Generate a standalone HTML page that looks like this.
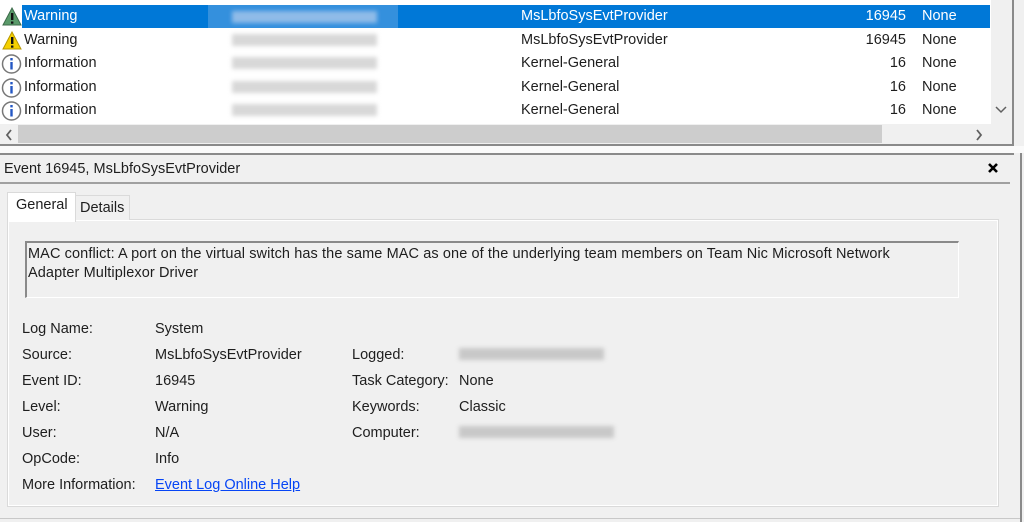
<!DOCTYPE html>
<html><head><style>
body{margin:0;width:1024px;height:522px;background:#f0f0f0;font-family:"Liberation Sans",sans-serif;font-size:14.5px;color:#1e1e1e;position:relative;overflow:hidden}
.a{position:absolute;white-space:nowrap}
.blur{position:absolute;left:232px;width:145px;height:12px;background:#d8d8d8;filter:blur(2px)}
</style></head><body>
<div class="a" style="left:0;top:0;width:1012px;height:124px;background:#fff"></div>
<div class="a" style="left:1012px;top:0;width:2px;height:146px;background:#8a8a8a"></div>
<div class="a" style="left:22px;top:5px;width:968px;height:23px;background:#0078d7"></div>
<div class="a" style="left:208px;top:5px;width:190px;height:23px;background:#4a9ae0;opacity:.7"></div>
<div class="blur" style="top:11px;background:#8fbbe8"></div>
<div class="blur" style="top:34px"></div><div class="blur" style="top:57px"></div><div class="blur" style="top:81px"></div><div class="blur" style="top:104px"></div>

<svg class="a" style="left:2px;top:7px" width="20" height="19"><path d="M10 1 L19 18 H1 Z" fill="#5a9a6a" stroke="#3d6b4a"/><rect x="9" y="6" width="2.4" height="7" fill="#111"/><rect x="9" y="14.5" width="2.4" height="2.2" fill="#111"/></svg>
<svg class="a" style="left:2px;top:31px" width="20" height="19"><path d="M10 1 L19 18 H1 Z" fill="#f5d000" stroke="#b89800"/><rect x="9" y="6" width="2.4" height="7" fill="#111"/><rect x="9" y="14.5" width="2.4" height="2.2" fill="#111"/></svg>
<svg class="a" style="left:1px;top:54px" width="21" height="20"><circle cx="10.5" cy="10" r="9" fill="#fff" stroke="#777" stroke-width="1.5"/><rect x="9.3" y="8" width="2.4" height="7.5" fill="#2457c4"/><rect x="9.3" y="4" width="2.4" height="2.4" fill="#2457c4"/></svg>
<svg class="a" style="left:1px;top:78px" width="21" height="20"><circle cx="10.5" cy="10" r="9" fill="#fff" stroke="#777" stroke-width="1.5"/><rect x="9.3" y="8" width="2.4" height="7.5" fill="#2457c4"/><rect x="9.3" y="4" width="2.4" height="2.4" fill="#2457c4"/></svg>
<svg class="a" style="left:1px;top:101px" width="21" height="20"><circle cx="10.5" cy="10" r="9" fill="#fff" stroke="#777" stroke-width="1.5"/><rect x="9.3" y="8" width="2.4" height="7.5" fill="#2457c4"/><rect x="9.3" y="4" width="2.4" height="2.4" fill="#2457c4"/></svg>

<div class="a" style="left:24px;top:8px;color:#fff">Warning</div>
<div class="a" style="left:521px;top:8px;color:#fff">MsLbfoSysEvtProvider</div>
<div class="a" style="left:850px;top:8px;width:56px;text-align:right;color:#fff">16945</div>
<div class="a" style="left:922px;top:8px;color:#fff">None</div>
<div class="a" style="left:24px;top:32px">Warning</div>
<div class="a" style="left:521px;top:32px">MsLbfoSysEvtProvider</div>
<div class="a" style="left:850px;top:32px;width:56px;text-align:right">16945</div>
<div class="a" style="left:922px;top:32px">None</div>
<div class="a" style="left:24px;top:55px">Information</div><div class="a" style="left:521px;top:55px">Kernel-General</div><div class="a" style="left:850px;top:55px;width:56px;text-align:right">16</div><div class="a" style="left:922px;top:55px">None</div>
<div class="a" style="left:24px;top:79px">Information</div><div class="a" style="left:521px;top:79px">Kernel-General</div><div class="a" style="left:850px;top:79px;width:56px;text-align:right">16</div><div class="a" style="left:922px;top:79px">None</div>
<div class="a" style="left:24px;top:102px">Information</div><div class="a" style="left:521px;top:102px">Kernel-General</div><div class="a" style="left:850px;top:102px;width:56px;text-align:right">16</div><div class="a" style="left:922px;top:102px">None</div>
<div class="a" style="left:991px;top:0;width:21px;height:124px;background:#f0f0f0"></div>
<svg class="a" style="left:994px;top:105px" width="14" height="10"><path d="M2 2 L7 7 L12 2" fill="none" stroke="#606060" stroke-width="1.5"/></svg>
<div class="a" style="left:0;top:124px;width:1012px;height:20px;background:#f0f0f0"></div>
<div class="a" style="left:18px;top:125px;width:864px;height:18px;background:#cdcdcd"></div>
<svg class="a" style="left:4px;top:128px" width="10" height="14"><path d="M7 2 L3 7 L7 12" fill="none" stroke="#606060" stroke-width="1.8"/></svg>
<svg class="a" style="left:974px;top:128px" width="10" height="14"><path d="M3 2 L7 7 L3 12" fill="none" stroke="#606060" stroke-width="1.8"/></svg>
<div class="a" style="left:0;top:144px;width:1014px;height:2px;background:#8a8a8a"></div>
<div class="a" style="left:0;top:146px;width:1024px;height:7px;background:#fafafa"></div>
<div class="a" style="left:0;top:153px;width:1014px;height:2px;background:#8a8a8a"></div>
<div class="a" style="left:1020px;top:153px;width:2px;height:369px;background:#8a8a8a"></div>
<div class="a" style="left:4px;top:161px">Event 16945, MsLbfoSysEvtProvider</div>
<svg class="a" style="left:987px;top:162px" width="12" height="12"><path d="M2 2 L10 10 M10 2 L2 10" stroke="#000" stroke-width="2.6"/></svg>
<div class="a" style="left:0;top:182px;width:1010px;height:2px;background:#a0a0a0"></div>
<div class="a" style="left:7px;top:219px;width:990px;height:286px;border:1px solid #dadada;background:#f0f0f0;box-shadow:inset 0 0 0 1px #fff"></div>
<div class="a" style="left:75px;top:195px;width:53px;height:24px;border:1px solid #dadada;border-bottom:none;background:#f0f0f0"></div>
<div class="a" style="left:80px;top:200px">Details</div>
<div class="a" style="left:7px;top:192px;width:67px;height:29px;border:1px solid #dadada;border-bottom:none;background:#fff"></div>
<div class="a" style="left:16px;top:197px">General</div>
<div class="a" style="left:25px;top:241px;width:931px;height:54px;border:1px solid #fff;border-top:2px solid #8a8a8a;border-left:2px solid #8a8a8a;background:#f0f0f0"></div>
<div class="a" style="left:28px;top:245px;line-height:19px;letter-spacing:0.1px">MAC conflict: A port on the virtual switch has the same MAC as one of the underlying team members on Team Nic Microsoft Network<br>Adapter Multiplexor Driver</div>
<div class="a" style="left:22px;top:316px;line-height:26px">Log Name:<br>Source:<br>Event ID:<br>Level:<br>User:<br>OpCode:<br>More Information:</div>
<div class="a" style="left:155px;top:316px;line-height:26px">System<br>MsLbfoSysEvtProvider<br>16945<br>Warning<br>N/A<br>Info<br><span style="color:#0645f5;text-decoration:underline">Event Log Online Help</span></div>
<div class="a" style="left:352px;top:342px;line-height:26px">Logged:<br>Task Category:<br>Keywords:<br>Computer:</div>
<div class="a" style="left:459px;top:368px;line-height:26px">None<br>Classic</div>
<div class="a" style="left:459px;top:348px;width:145px;height:12px;background:#c8c8c8;filter:blur(2px)"></div>
<div class="a" style="left:459px;top:426px;width:155px;height:12px;background:#c8c8c8;filter:blur(2px)"></div>
<div class="a" style="left:0;top:518px;width:1020px;height:1px;background:#c8c8c8"></div>
</body></html>
